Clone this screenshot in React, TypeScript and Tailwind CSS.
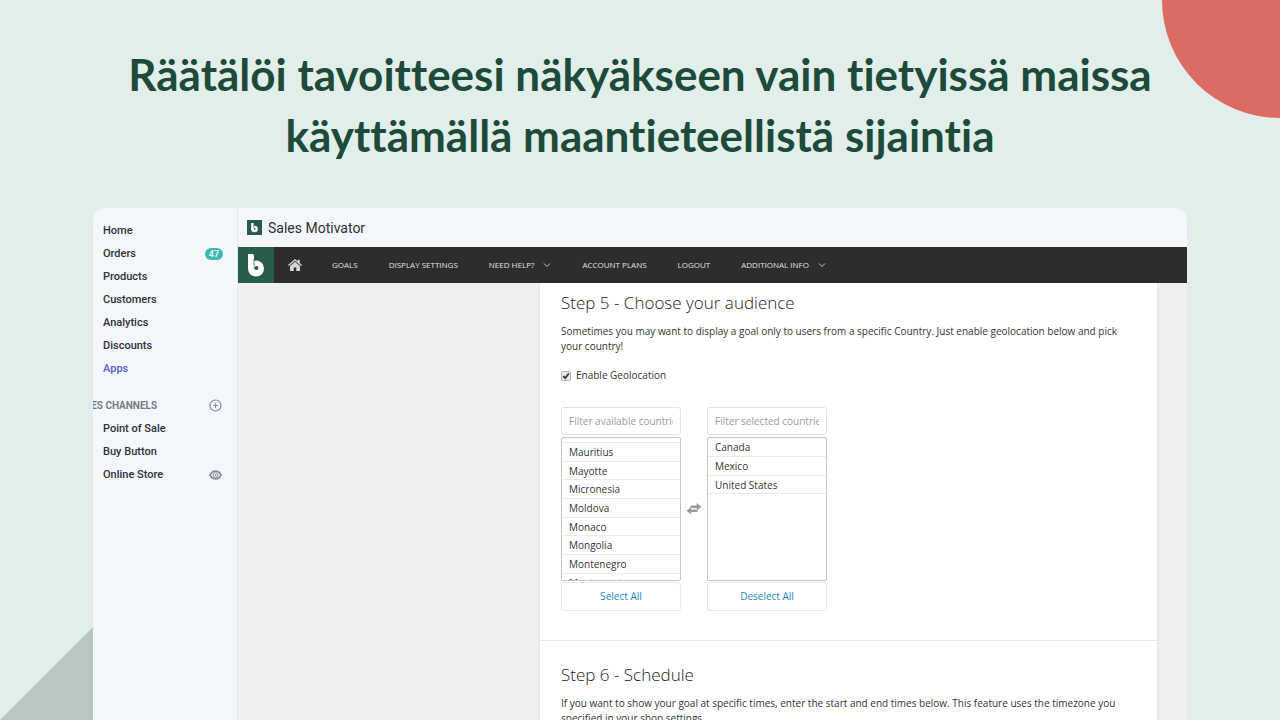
const adminLinks = [
  { label: "Home" },
  { label: "Orders", badge: "47" },
  { label: "Products" },
  { label: "Customers" },
  { label: "Analytics" },
  { label: "Discounts" },
  { label: "Apps", active: true },
];

const channels = [
  { label: "Point of Sale" },
  { label: "Buy Button" },
  { label: "Online Store", preview: true },
];

const navLinks = [
  { label: "GOALS" },
  { label: "DISPLAY SETTINGS" },
  { label: "NEED HELP?", menu: true },
  { label: "ACCOUNT PLANS" },
  { label: "LOGOUT" },
  { label: "ADDITIONAL INFO", menu: true },
];

const available = [
  "Mauritius",
  "Mayotte",
  "Micronesia",
  "Moldova",
  "Monaco",
  "Mongolia",
  "Montenegro",
  "Montserrat",
];

const selected = ["Canada", "Mexico", "United States"];

function Logo({ className }: { className: string }) {
  return (
    <svg viewBox="0 0 36 36" className={className} aria-hidden="true">
      <rect width="36" height="36" fill="#265c48" />
      <path d="M10 7h4.500a1.500 1.500 0 0 1 1.500 1.500V21h-6z" fill="#fff" />
      <circle cx="18" cy="21.500" r="8" fill="#fff" />
      <circle cx="18.300" cy="21" r="2.100" fill="#265c48" />
      <path d="M16 12v7" stroke="#265c48" strokeWidth="0.800" />
    </svg>
  );
}

function HomeIcon() {
  return (
    <svg viewBox="0 0 28 24" className="h-3 w-3.5" fill="#d6d6d6" aria-hidden="true">
      <path d="M14 0 0 12l1.600 2L14 3.600 26.400 14 28 12l-4.500-3.900V1.500h-4v3.200z" />
      <path d="M14 5.500 4 14v9a1 1 0 0 0 1 1h6.500v-7h5v7H23a1 1 0 0 0 1-1v-9z" />
    </svg>
  );
}

function Chevron() {
  return (
    <svg viewBox="0 0 8 6" className="h-1.5 w-2" fill="none" stroke="#c4c4c4" aria-hidden="true">
      <path d="M1 1.500 4 4.500 7 1.500" />
    </svg>
  );
}

function SwapIcon() {
  return (
    <svg viewBox="0 0 16 12" className="mx-[5px] h-3 w-4" fill="#999" aria-hidden="true">
      <path d="M4.500 2.600h6.300V0L15.500 3.800l-4.700 3.800V5.200H4.500z" />
      <path d="M11.500 9H5.200v2.600L.5 7.800 5.200 4v2.400h6.300z" />
      <path d="M5.200 5.800h5.600" stroke="#fff" strokeWidth="0.600" />
    </svg>
  );
}

function Sidebar() {
  return (
    <aside className="w-[145px] shrink-0 overflow-hidden border-r border-[#e3e8ee] bg-[#f3f6fb] pt-[11px] font-[Roboto,sans-serif] text-[11px] leading-[23px] font-medium text-[#2c3238]">
      <ul>
        {adminLinks.map((l) => (
          <li key={l.label} className="flex items-center justify-between pr-3.5 pl-2.5">
            <a href="#" className={l.active ? "font-semibold text-[#5c6ac4]" : ""}>
              {l.label}
            </a>
            {l.badge && (
              <span className="rounded-full bg-[#3fb8b4] px-1 text-[9px] leading-3 text-white">{l.badge}</span>
            )}
          </li>
        ))}
      </ul>
      <div className="mt-3.5 flex items-center justify-between pr-[15px]">
        <h2 className="-ml-5 text-[10px] font-semibold whitespace-nowrap text-[#6b7781]">SALES CHANNELS</h2>
        <button type="button" aria-label="Add sales channel">
          <svg viewBox="0 0 13 13" className="size-[13px]" fill="none" stroke="#84909a" strokeWidth="1.200">
            <circle cx="6.500" cy="6.500" r="5.500" />
            <path d="M6.500 4v5M4 6.500h5" />
          </svg>
        </button>
      </div>
      <ul>
        {channels.map((c) => (
          <li key={c.label} className="flex items-center justify-between pr-[15px] pl-2.5">
            <a href="#">{c.label}</a>
            {c.preview && (
              <button type="button" aria-label="View online store">
                <svg viewBox="0 0 13 10" className="h-2.5 w-[13px]" fill="none" stroke="#84909a">
                  <path d="M1 5c1.300-2.600 3.300-3.900 5.500-3.900S10.700 2.400 12 5c-1.300 2.600-3.300 3.900-5.500 3.900S2.300 7.600 1 5z" strokeWidth="1.700" />
                  <circle cx="6.500" cy="5" r="2.300" />
                  <circle cx="6.500" cy="5" r="0.500" fill="#84909a" />
                </svg>
              </button>
            )}
          </li>
        ))}
      </ul>
    </aside>
  );
}

function NavBar() {
  return (
    <nav className="flex h-9 items-center bg-[#2d2d2d] text-[8px] text-[#e2e2e2]">
      <a href="#" aria-label="Sales Motivator">
        <Logo className="size-9" />
      </a>
      <a href="#" aria-label="Home" className="ml-3.5">
        <HomeIcon />
      </a>
      <ul className="ml-[30px] flex items-center gap-[31px] whitespace-nowrap">
        {navLinks.map((n) => (
          <li key={n.label}>
            <a href="#" className="flex items-center gap-[9px]">
              {n.label}
              {n.menu && <Chevron />}
            </a>
          </li>
        ))}
      </ul>
    </nav>
  );
}

type CountryBoxProps = {
  placeholder: string;
  countries: string[];
  action: string;
  scrolled?: boolean;
};

function CountryBox({ placeholder, countries, action, scrolled }: CountryBoxProps) {
  return (
    <div className="w-[120px]">
      <input
        type="text"
        aria-label={placeholder}
        placeholder={placeholder}
        className="h-7 w-full rounded-[3px] border border-[#e2e2e2] px-[7px] text-[10px] placeholder:text-[#9a9a9a]"
      />
      <ul className={"mt-0.5 h-36 overflow-hidden rounded-[2px] border border-[#c4c4c4]" + (scrolled ? " pt-1" : "")}>
        {scrolled && <li className="border-b border-[#ebebeb]" />}
        {countries.map((c) => (
          <li key={c} className="h-[19px] border-b border-[#ebebeb] px-[7px] leading-[18px] nth-[3n]:h-[18px]">
            {c}
          </li>
        ))}
      </ul>
      <button type="button" className="mt-px h-[29px] w-full rounded-[3px] border border-[#e6e6e6] text-[#1c87bb]">
        {action}
      </button>
    </div>
  );
}

export default function App() {
  return (
    <div className="relative flex h-screen flex-col overflow-hidden bg-[#e1eee9]">
      <div className="absolute -top-[118px] -right-[118px] size-[236px] rounded-full bg-[#dc6b63]" />
      <svg viewBox="0 0 10 10" className="absolute bottom-0 left-0 size-[93px]" aria-hidden="true">
        <path d="M10 0v10H0z" fill="#b4c8c1" />
      </svg>

      <h1 className="mt-11 text-center font-[Lato,sans-serif] text-[44px] leading-[61px] font-bold text-[#1d4a39] [font-variant-ligatures:none]">
        Räätälöi tavoitteesi näkyäkseen vain tietyissä maissa
        <br />
        käyttämällä maantieteellistä sijaintia
      </h1>

      <div className="relative mx-[93px] mt-[42px] flex flex-1 overflow-hidden rounded-t-xl bg-[#f0f0f0]">
        <Sidebar />
        <div className="min-w-0 flex-1 font-['Open_Sans',sans-serif]">
          <header className="flex h-[39px] items-center gap-1.5 bg-[#f3f6fb] pl-[9px]">
            <Logo className="size-[15px]" />
            <span className="font-[Roboto,sans-serif] text-sm text-[#2c3238]">Sales Motivator</span>
          </header>
          <NavBar />
          <main className="pr-[30px] pl-[302px] text-[10px] leading-[15px] text-[#333]">
            <div className="bg-white shadow-sm">
              <section className="border-b border-[#e6e6e6] px-[21px] pt-2 pb-[29px]">
                <h2 className="text-[17px] leading-6 font-light text-[#222]">Step 5 - Choose your audience</h2>
                <p className="mt-[9px]">
                  Sometimes you may want to display a goal only to users from a specific Country. Just enable
                  geolocation below and pick your country!
                </p>
                <label className="mt-3.5 flex items-center gap-[5px]">
                  <span className="relative">
                    <input
                      type="checkbox"
                      defaultChecked
                      className="peer block size-2.5 appearance-none rounded-[2px] border border-[#b5b5b5] bg-[#e9e9e9]"
                    />
                    <svg
                      viewBox="0 0 10 10"
                      className="pointer-events-none absolute inset-0 hidden size-2.5 peer-checked:block"
                      fill="none"
                      stroke="#333"
                      strokeWidth="1.800"
                      aria-hidden="true"
                    >
                      <path d="M2.300 5.200 4.200 7.200 7.800 2.500" />
                    </svg>
                  </span>
                  Enable Geolocation
                </label>
                <div className="mt-6 flex items-center">
                  <CountryBox
                    placeholder="Filter available countries"
                    countries={available}
                    action="Select All"
                    scrolled
                  />
                  <SwapIcon />
                  <CountryBox placeholder="Filter selected countries" countries={selected} action="Deselect All" />
                </div>
              </section>
              <section className="px-[21px] pt-[22px] pb-8">
                <h2 className="text-[17px] leading-6 font-light text-[#222]">Step 6 - Schedule</h2>
                <p className="mt-[9px]">
                  If you want to show your goal at specific times, enter the start and end times below. This feature
                  uses the timezone you specified in your shop settings.
                </p>
              </section>
            </div>
          </main>
        </div>
      </div>
    </div>
  );
}
